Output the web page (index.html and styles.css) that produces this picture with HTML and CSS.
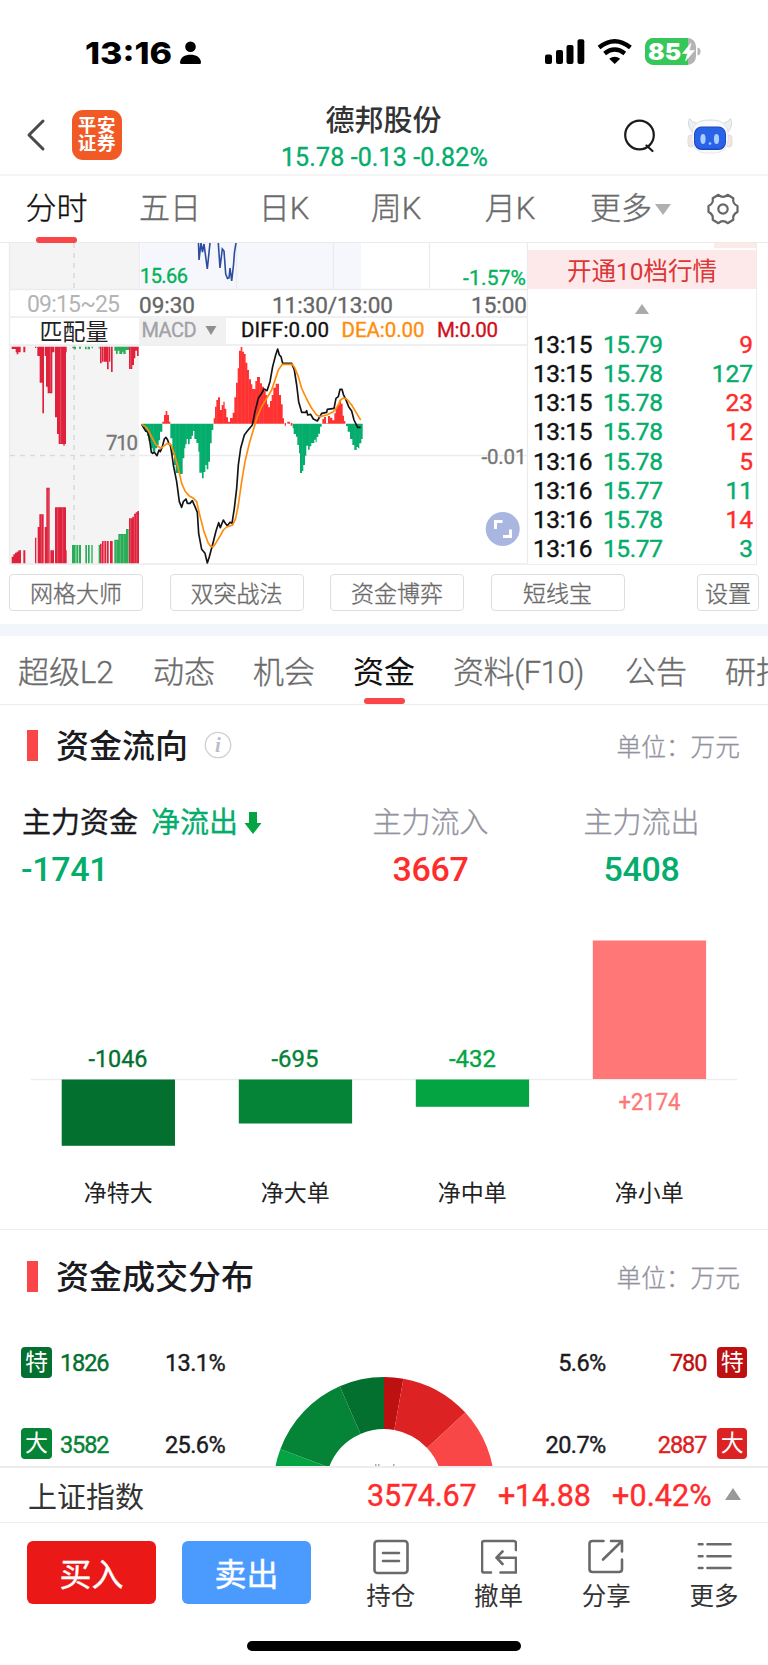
FILE: index.html
```html
<!DOCTYPE html>
<html lang="zh-CN">
<head>
<meta charset="utf-8">
<title>德邦股份</title>
<link rel="stylesheet" href="styles.css">
</head>
<body>
<div class="phone">
  <div class="status">
    <svg class="clock" viewBox="85 37 120 31" width="120" height="31"><text x="85" y="63.500" textLength="87" lengthAdjust="spacingAndGlyphs">13:16</text>
      <g transform="translate(180 41)"><circle cx="10.500" cy="5.800" r="5.300"/><path d="M0 21.500C.3 16 5 13.700 10.500 13.700S20.700 16 21 21.500Q21 23 19.500 23H1.500Q0 23 0 21.500Z"/></g></svg>
    <svg class="signals" viewBox="545 37 156 29" width="156" height="29">
      <rect x="545" y="54.500" width="7" height="9.500" rx="2"/><rect x="556" y="50" width="7" height="14" rx="2"/><rect x="566.500" y="45" width="7" height="19" rx="2"/><rect x="577.500" y="39.300" width="6.800" height="24.700" rx="2"/>
      <g fill="none" stroke="#000" stroke-width="4.400"><path d="M599 47.500Q614.700 34.800 630.400 47.500"/><path d="M604.600 53.400Q614.700 45.500 624.800 53.400"/></g>
      <path d="M609.200 58.800Q614.700 54.600 620.200 58.800L614.700 64Z"/>
      <rect x="645" y="38" width="51" height="27" rx="8.500" fill="#b3b3b3"/>
      <path d="M653.500 38H688V65H653.500A8.500 8.500 0 0 1 645 56.500V46.500A8.500 8.500 0 0 1 653.500 38Z" fill="#35c759"/>
      <path d="M697.500 47.500Q700.500 48 700.500 51.500T697.500 55.500Z" fill="#b3b3b3"/>
      <path d="M691 43L682.500 53.500H687.500L685.500 61L694.500 50.500H689.300Z" fill="#fff" stroke="#fff" stroke-width=".6"/>
      <text x="648" y="60" class="batt" textLength="33" lengthAdjust="spacingAndGlyphs">85</text>
    </svg>
  </div>

  <header class="head">
    <svg class="back" viewBox="0 0 20 34" width="20" height="34"><path d="M17 3L3 17L17 31" fill="none" stroke="#4a4a4a" stroke-width="3" stroke-linecap="round" stroke-linejoin="round"/></svg>
    <div class="logo"><span>平安</span><span>证券</span></div>
    <div class="title"><div class="name">德邦股份</div><div class="quote">15.78 -0.13 -0.82%</div></div>
    <svg class="search" viewBox="0 0 34 36" width="34" height="36"><g fill="none" stroke="#1b1b1f" stroke-width="2.200" stroke-linecap="round"><circle cx="16.500" cy="17" r="14.300"/><path d="M23.500 27.500L29.500 33"/></g></svg>
    <svg class="robot" viewBox="0 0 46 36" width="46" height="36">
      <path d="M5 14Q-.5 7 2.500 .5Q5.500 4.500 10 5.500Q13 2 23 2T36 5.500Q40.500 4.500 43.500 .5Q46.500 7 41 14Z" fill="#eeeff3" stroke="#d6d8df" stroke-width="1"/>
      <rect x="1" y="17" width="6" height="12" rx="3" fill="#f1e6e7" stroke="#dccfd2" stroke-width=".7"/><rect x="39" y="17" width="6" height="12" rx="3" fill="#f1e6e7" stroke="#dccfd2" stroke-width=".7"/>
      <rect x="5" y="2.500" width="36" height="32.500" rx="13" fill="#fafafc" stroke="#e0e1e8" stroke-width=".8"/>
      <rect x="7" y="8.500" width="32" height="23.500" rx="7.500" fill="#1c49bd"/><rect x="8" y="9.500" width="30" height="21" rx="6.500" fill="#2a63e8"/>
      <ellipse cx="16" cy="21" rx="2.600" ry="5" fill="#a8cfff"/><ellipse cx="29.500" cy="21" rx="2.600" ry="5" fill="#a8cfff"/><circle cx="23" cy="25.500" r="1.300" fill="#a8cfff"/>
    </svg>
  </header>

  <nav class="periods">
    <span class="on">分时</span><span>五日</span><span>日K</span><span>周K</span><span>月K</span>
    <span class="more">更多<i class="down"></i></span>
    <svg viewBox="-16 -16 32 32" width="32" height="32"><g fill="none" stroke="#666" stroke-width="2.200" stroke-linejoin="round"><path d="M14.500-3V3Q9.300 5.400 10.300 10.800L4.600 14.200Q0 10.200-4.600 14.200L-10.300 10.800Q-9.300 5.400-14.500 3V-3Q-9.300-5.400-10.300-10.800L-4.600-14.200Q0-10.200 4.600-14.200L10.300-10.800Q9.300-5.400 14.500-3Z"/><circle r="4.700"/></g></svg>
  </nav>

  <section class="market">
    <svg class="chart" viewBox="0 243 528 322" width="528" height="322">
      <path fill="#f4f4f4" d="M10 243H139V289H10ZM10 345H139V564H10Z"/>
      <path fill="#f5f7fc" d="M141 243H361V289H141Z"/>
      <path fill="#f1f1f2" d="M139 318H226V344H139Z"/>
      <g fill="none" stroke="#ececee" stroke-width="1.300">
        <path d="M9.500 243V564M139.500 243V289M236.500 243V289M333.500 243V289M429.500 243V289M527.500 243V564.500M10 289.500H528M10 317H528M10 345H528M139 455.500H528M10 564H528"/>
      </g>
      <path d="M74 243V289M74 345V564M10 455.500H139" fill="none" stroke="#d9d9da" stroke-width="1.500" stroke-dasharray="5 5"/>
      <path d="M198.500 243L199 260L201 243L202.500 252L204 244L207.300 269L210 243M218.300 243L220 268L222.300 249L224 251L225.700 274L227.500 278.500L229 278L230 268L231.700 281L233.500 265L234.500 252L236 243" fill="none" stroke="#2c4d9c" stroke-width="1.600"/>
      <g transform="translate(0 235) scale(.33333)">
        <path fill="#e0213c" d="M35 335H62V352H55V358H50V352H47V342H35ZM70 335H76V352H70ZM105 335H109V339H105ZM112 335H132V535H127V443H119V363H112ZM134 335H163V352H157V475H143V455H138V363H134ZM165 335H200V352H198V627H194V632H190V627H176V597H171V547H165ZM300 335H305V385H300ZM306 335H311V380H306ZM312 335H326V403H321V380H312ZM327 335H331V380H327ZM333 335H338V411H333ZM387 335H416V363H411V347H406V370H402V390H397V402H387Z"/>
        <path fill="#2bad58" d="M217 335H222V340H217ZM222 335H228V343H222ZM237 335H243V341H237ZM255 335H260V343H255ZM263 335H270V343H263ZM275 335H279V340H275ZM296 335H299V341H296ZM343 335H387V345H377V357H370V350H367V357H358V347H353V357H348V347H343Z"/>
        <path fill="#e0213c" d="M35 985V965H40V958H45V953H50V950H55V946H63V985ZM70 985V946H76V985ZM105 985V908H109V985ZM113 985V876H118V838H131V985ZM134 985V876H139V758H149V985ZM151 985V946H162V985ZM165 985V817H198V946H200V985ZM300 985V926H305V985ZM306 985V918H311V985ZM313 985V918H318V985ZM320 985V918H326V985ZM330 985V918H338V985ZM387 985V850H397V845H402V836H407V832H412V828H417V985Z"/>
        <path fill="#2bad58" d="M216 985V930H227V985ZM229 985V930H235V985ZM237 985V930H243V985ZM256 985V930H261V985ZM264 985V930H269V985ZM274 985V930H278V985ZM296 985V930H300V985ZM343 985V914H355V897H378V882H386V985Z"/>
        <path stroke="#f4f4f4" stroke-opacity=".55" stroke-width="1.200" d="M144.500 763V985M173 820V985M188 820V985M124 840V985M182 337V625M151 337V470M392 337V985M349 918V985M361 900V985M371 900V985M403 840V985M410 837V985"/>
      </g>
      <g transform="translate(130 235) scale(.33333)">
        <path fill="#04ad6c" d="M35 566V572H40V580H46V590H51V602H56V618H62V640H68V650H76V640H82V630H86V616H90V590H97V566ZM121 566V610H127V660H132V690H137V714H150V717H158V670H163V640H166V628H170V612H174V628H179V612H185V602H189V588H193V612H199V624H205V650H208V713H216V730H221V711H226V690H230V703H235V680H240V625H245V585H250V566ZM488 566V580H491V597H498V605H502V630H507V655H510V714H516V708H520V690H525V662H529V632H534V644H539V634H544V624H553V614H557V622H560V606H565V596H570V575H575V566ZM648 566V573H653V590H660V612H667V630H673V645H680V636H684V640H688V625H694V612H698V566Z"/>
        <path fill="#ff3232" d="M97 566V560H102V540H107V528H112V540H117V560H121V566ZM251 566V550H255V515H259V495H264V487H270V525H275V510H280V500H284V521H289V547H294V560H300V549H308V533H313V487H318V443H323V400H327V347H332V336H337V350H342V357H347V383H352V405H357V433H363V448H367V462H376V438H381V426H390V445H396V455H402V467H407V480H411V508H415V517H420V498H425V480H430V458H437V446H447V480H453V508H458V550H462V566ZM464 564H468V572H464ZM472 560H480V566H472ZM482 564H487V572H482ZM577 566V552H582V546H588V565H594V543H600V548H607V556H613V535H617V516H623V510H628V494H633V506H638V542H642V558H646V566Z"/>
        <path stroke="#fff" stroke-opacity=".22" stroke-width="1" d="M60 566V630M71 566V640M137 566V700M148 566V700M169 566V610M191 566V590M213 566V710M226 566V690M259 500V566M280 505V566M323 405V566M334 340V566M345 362V566M356 410V566M367 465V566M378 435V566M389 435V566M400 465V566M430 460V566M441 450V566M507 566V650M518 566V700M540 566V632M675 566V635M690 566V620"/>
        <path fill="none" stroke="#141414" stroke-width="5" stroke-linejoin="round" d="M35 568L47 588L54 592L60 622L64 652L68 655L73 652L81 662L87 645L91 650L97 635L103 612L108 607L113 615L117 627L121 630L126 660L130 690L140 740L148 800L155 817L160 800L168 792L172 805H180L187 797L195 815L202 832L206 895L215 943L225 955L232 984L238 965L250 920L258 888L266 863L271 878L280 855L286 865L292 872L300 862L306 865L313 820L320 760L325 690L332 640L343 600L352 588L367 570L375 530L385 490L395 475L402 462L411 467L420 440L428 395L437 360L443 342L448 360L453 365L458 385H485L493 405L500 450L506 500L515 532H527L530 527L533 540L542 538L550 552L562 558L575 535L590 532L592 523L612 520L618 490L625 485L630 463H636L640 478L648 495L656 515L665 528L672 555L683 577H692"/>
        <path fill="none" stroke="#ff8d0b" stroke-width="5" stroke-linejoin="round" d="M35 568L50 578L62 600L77 628L92 640L103 632L112 625L122 628L132 655L145 700L155 745L165 768L177 782L188 788L200 800L208 835L222 890L235 925L243 935H250L260 920L272 900L280 885L290 876L308 870L317 850L325 810L335 740L345 680L358 625L370 585L382 545L395 515L410 490L425 465L435 435L445 405L457 388H487L495 400L505 425L515 460L530 492L545 520L560 540L570 545L590 540L610 530L620 518L632 495L640 489L650 492L665 510L680 535L692 555"/>
      </g>
      <g class="num mid">
        <text x="140" y="282.500" font-size="20" fill="#04b25a" stroke="#04b25a" textLength="48">15.66</text>
        <text x="463" y="284.500" font-size="21" fill="#04b25a" stroke="#04b25a" textLength="63">-1.57%</text>
        <text x="27" y="311.500" font-size="23" fill="#b4b4b4" textLength="93">09:15~25</text>
        <text x="139" y="312.800" font-size="22.500" fill="#666" stroke="#666" textLength="56">09:30</text>
        <text x="272" y="312.800" font-size="22.500" fill="#666" stroke="#666" textLength="121">11:30/13:00</text>
        <text x="471" y="312.800" font-size="22.500" fill="#666" stroke="#666" textLength="56">15:00</text>
        <text x="39.500" y="340" font-size="23" fill="#222">匹配量</text>
        <text x="141.500" y="337" font-size="20" fill="#a2a2a8" stroke="#a2a2a8" textLength="55">MACD</text>
        <text x="241" y="337.300" font-size="20.500" fill="#111" stroke="#111" textLength="88">DIFF:0.00</text>
        <text x="341.500" y="337.300" font-size="20.500" fill="#ff8d0b" stroke="#ff8d0b" textLength="83">DEA:0.00</text>
        <text x="437" y="337.300" font-size="20.500" fill="#d0101c" stroke="#d0101c" textLength="61">M:0.00</text>
        <text x="106" y="450" font-size="20.500" fill="#777" stroke="#777" textLength="32">710</text>
        <text x="481.500" y="463.500" font-size="20.500" fill="#777" stroke="#777" textLength="45">-0.01</text>
      </g>
      <path d="M205.500 326H216.500L211 335Z" fill="#8f8f8f"/>
      <circle cx="502.700" cy="529" r="17" fill="#a9b7e0"/>
      <path d="M495.500 529V521.500H502.500M503 536.500H510.500V529.500" fill="none" stroke="#fff" stroke-width="3"/>
    </svg>
    <aside class="ticks">
      <div class="cut"><i></i></div>
      <div class="open10">开通10档行情</div>
      <div class="tri"><i class="up"></i></div>
      <div class="tick"><b>13:15</b><span>15.79</span><em class="r">9</em></div>
      <div class="tick"><b>13:15</b><span>15.78</span><em>127</em></div>
      <div class="tick"><b>13:15</b><span>15.78</span><em class="r">23</em></div>
      <div class="tick"><b>13:15</b><span>15.78</span><em class="r">12</em></div>
      <div class="tick"><b>13:16</b><span>15.78</span><em class="r">5</em></div>
      <div class="tick"><b>13:16</b><span>15.77</span><em>11</em></div>
      <div class="tick"><b>13:16</b><span>15.78</span><em class="r">14</em></div>
      <div class="tick"><b>13:16</b><span>15.77</span><em>3</em></div>
    </aside>
  </section>

  <div class="tools"><span>网格大师</span><span>双突战法</span><span>资金博弈</span><span>短线宝</span><span class="set">设置</span></div>
  <div class="band"></div>
  <nav class="topics"><span class="t0">超级L2</span><span>动态</span><span>机会</span><span class="on">资金</span><span class="t4">资料(F10)</span><span>公告</span><span>研报</span></nav>

  <section class="flow">
    <div class="sec-head"><i class="mark"></i><h2>资金流向</h2>
      <svg class="info" viewBox="0 0 28 28" width="28" height="28"><circle cx="14" cy="14" r="12.700" fill="none" stroke="#cfcfd8" stroke-width="1.300"/><text x="14" y="21" text-anchor="middle">i</text></svg>
      <span class="unit">单位：万元</span></div>
    <div class="stats">
      <div class="main"><div class="lab">主力资金<span class="out">净流出</span><svg viewBox="0 0 18 22" width="18" height="22"><path d="M5 0H13V11H17.500L9 22L.5 11H5Z" fill="#04a443"/></svg></div><div class="val g">-1741</div></div>
      <div class="side in"><div class="lab">主力流入</div><div class="val r">3667</div></div>
      <div class="side"><div class="lab">主力流出</div><div class="val g">5408</div></div>
    </div>
    <svg class="bars" viewBox="0 930 768 299" width="768" height="299">
      <path d="M31 1079.500H737" stroke="#ededf0" stroke-width="1.300"/>
      <rect x="61.700" y="1079.500" width="113.300" height="66.300" fill="#04702f"/>
      <rect x="238.800" y="1079.500" width="113.300" height="44" fill="#058337"/>
      <rect x="415.800" y="1079.500" width="113.300" height="27.300" fill="#04a443"/>
      <rect x="592.800" y="940.500" width="113.300" height="138.500" fill="#ff7777"/>
      <g class="num mid" font-size="23.500">
        <text x="88.500" y="1067" fill="#04702f" stroke="#04702f" textLength="59" lengthAdjust="spacingAndGlyphs">-1046</text>
        <text x="271.500" y="1067" fill="#058337" stroke="#058337" textLength="47" lengthAdjust="spacingAndGlyphs">-695</text>
        <text x="449" y="1067" fill="#04a443" stroke="#04a443" textLength="47" lengthAdjust="spacingAndGlyphs">-432</text>
        <text x="618.500" y="1110" fill="#ff7777" stroke="#ff7777" textLength="62" lengthAdjust="spacingAndGlyphs">+2174</text>
      </g>
      <g class="num" font-size="23" fill="#222" text-anchor="middle">
        <text x="118.300" y="1201">净特大</text><text x="295.300" y="1201">净大单</text><text x="472.300" y="1201">净中单</text><text x="649.300" y="1201">净小单</text>
      </g>
    </svg>
  </section>

  <section class="dist">
    <div class="sec-head"><i class="mark"></i><h2>资金成交分布</h2><span class="unit">单位：万元</span></div>
    <div class="split">
      <div class="col">
        <div class="row"><i class="g1">特</i><span class="c1">1826</span><b>13.1%</b></div>
        <div class="row"><i class="g2">大</i><span class="c2">3582</span><b>25.6%</b></div>
      </div>
      <svg class="donut" viewBox="264 1346 240 120" width="240" height="120">
        <path fill="#04702f" d="M384 1377A110.600 110.600 0 0 0 339.700 1386.200L360.500 1433.900A58.600 58.600 0 0 1 384 1429Z"/>
        <path fill="#058337" d="M339.700 1386.200A110.600 110.600 0 0 0 280.300 1449.200L329 1467.300A58.600 58.600 0 0 1 360.500 1433.900Z"/>
        <path fill="#04a443" d="M280.300 1449.200A110.600 110.600 0 0 0 273.400 1487.600H325.400A58.600 58.600 0 0 1 329 1467.300Z"/>
        <path fill="#bd1111" d="M384 1377A110.600 110.600 0 0 1 403.400 1378.700L394.300 1429.900A58.600 58.600 0 0 0 384 1429Z"/>
        <path fill="#dc2222" d="M403.400 1378.700A110.600 110.600 0 0 1 465.300 1412.600L427.100 1447.900A58.600 58.600 0 0 0 394.300 1429.900Z"/>
        <path fill="#f94747" d="M465.300 1412.600A110.600 110.600 0 0 1 494.600 1487.600H442.600A58.600 58.600 0 0 0 427.100 1447.900Z"/>
        <path fill="#aaa" d="M375 1464H376.500V1466H375ZM378 1464H379.500V1466H378ZM393 1464H394.500V1466H393Z"/>
      </svg>
      <div class="col right">
        <div class="row"><b>5.6%</b><span class="d1">780</span><i class="r1">特</i></div>
        <div class="row"><b>20.7%</b><span class="d2">2887</span><i class="r2">大</i></div>
      </div>
    </div>
  </section>

  <div class="index"><span class="iname">上证指数</span><span class="v1">3574.67</span><span class="v2">+14.88</span><span class="v3">+0.42%</span><i class="up"></i></div>

  <footer class="dock">
    <div class="btn buy">买入</div><div class="btn sell">卖出</div>
    <div class="act"><svg viewBox="0 0 36 36" width="36" height="36"><rect x="1.500" y="2" width="33" height="32" rx="3"/><path d="M10 14H26M10 22H26"/></svg>持仓</div>
    <div class="act"><svg viewBox="0 0 36 36" width="36" height="36"><path d="M35 11V4.500Q35 2 32.500 2H3Q1 2 1 4.500V31Q1 33.500 3 33.500H10M19.500 33.500H35V18.700H15.500M21.500 12.500L15.500 18.700L21.500 25"/></svg>撤单</div>
    <div class="act"><svg viewBox="0 0 36 36" width="36" height="36"><path d="M15.500 2H4.500Q1.500 2 1.500 5V30Q1.500 33 4.500 33H31Q34 33 34 30V20.500M15 20.500L34 2M23 2H34V12.500"/></svg>分享</div>
    <div class="act"><svg viewBox="0 0 36 36" width="36" height="36"><path d="M2.800 5.300H6.500M11.500 5.300H34.500M2.800 17.300H6.500M11.500 17.300H34.500M2.800 29H6.500M11.500 29H34.500"/></svg>更多</div>
  </footer>
  <div class="home"></div>
</div>
</body>
</html>
```
FILE: styles.css
```css
* { box-sizing: border-box; }
body { margin: 0; background: #fff; font-family: Roboto, "Noto Sans CJK SC", sans-serif; color: #1b1b1f; }
.phone { width: 768px; height: 1665px; overflow: hidden; background: #fff; display: flex; flex-direction: column; }
.phone > * { flex: none; }
svg { display: block; flex: none; }
i, em { font-style: normal; }
.num { font-family: Roboto, "Noto Sans CJK SC", sans-serif; }
.mid { stroke-width: .35px; }

.status { height: 100px; display: flex; align-items: flex-start; padding: 37px 67px 0 85px; }
.clock { overflow: visible; font: 800 30.500px Inter, sans-serif; }
.signals { margin-left: auto; }
.batt { font: 900 23px Inter, sans-serif; fill: #fff; }

.head { height: 76px; display: flex; padding: 0 35px 0 26px; border-bottom: 2px solid #f5f5f5; }
.back { margin-top: 18px; }
.logo { width: 50px; height: 50px; margin: 10px 0 0 26px; border-radius: 11px; background: #f15a24; color: #fff; font-size: 18.500px; font-weight: 700; line-height: 18px; padding-top: 7px; text-align: center; }
.logo span { display: block; height: 18px; letter-spacing: .6px; }
.title { width: 240px; margin-left: 142px; text-align: center; }
.name { font-size: 29px; line-height: 43px; font-weight: 500; color: #333; }
.quote { font-size: 25px; line-height: 30px; color: #04ad6c; margin: 0 -1px 0 1px; white-space: nowrap; letter-spacing: .12px; -webkit-text-stroke: .35px #04ad6c; }
.search { margin: 18px 0 0 120px; }
.robot { margin: 18px 0 0 30px; }

.periods { height: 67px; display: grid; grid-template-columns: 113px 114px 114px 110px 118px 122px 77px; border-bottom: 1px solid #ebebeb; font-size: 31px; line-height: 66px; color: #6a6a6a; text-align: center; font-weight: 300; -webkit-text-stroke: .35px currentColor; }
.periods svg { margin: 17px 0 0 16px; }
.periods .on { color: #111; position: relative; }
.on::after { content: ""; position: absolute; left: 50%; bottom: 0; width: 41px; height: 6px; margin-left: -20.500px; border-radius: 3px; background: #fa4549; }
.periods .on::after { bottom: -1px; }
.more { display: flex; align-items: center; padding-left: 21px; }
.down { border: 8px solid transparent; border-top: 11px solid #b0b0b0; border-bottom: 0; margin-left: 3px; }
.up { display: block; width: 0; border: 8.5px solid transparent; border-bottom: 12px solid #999; border-top: 0; }

.market { display: flex; height: 322px; }
.ticks { width: 229px; border-right: 1px solid #ececee; border-bottom: 1px solid #ececee; }
.cut { height: 7px; display: flex; justify-content: flex-end; }
.cut i { width: 42px; height: 5px; background: #fde9e8; }
.open10 { height: 39px; line-height: 44px; background: #fde9ea; color: #dc3636; font-size: 24.500px; text-align: center; }
.tri { height: 41px; display: flex; justify-content: center; padding-top: 15px; }
.tri .up { border-width: 0 7px 10px; border-bottom-color: #aaa; height: 0; }
.tick { display: flex; height: 29.150px; line-height: 30.500px; font-size: 24.500px; padding: 0 3px 0 5px; color: #04ad6c; letter-spacing: -.4px; -webkit-text-stroke: .4px currentColor; }
.tick b { width: 70px; color: #111; font-weight: 400; }
.tick em { margin-left: auto; letter-spacing: 0; }
.tick .r, .r { color: #ff2c2c; }
.g { color: #04ad6c; }

.tools { height: 59px; display: flex; gap: 26.500px; padding: 9px 9px 0 9px; }
.tools span { width: 134px; height: 37px; border: 1.500px solid #dedede; border-radius: 4px; font-size: 23px; line-height: 40px; text-align: center; color: #6a6a6a; font-weight: 300; -webkit-text-stroke: .35px currentColor; }
.tools .set { width: 62px; margin-left: auto; }
.band { height: 12px; background: #f2f5f9; }
.topics { height: 69px; display: flex; gap: 38px; padding-left: 18px; overflow: hidden; border-bottom: 1px solid #ebeef1; font-size: 31px; line-height: 74px; color: #6a6a6a; white-space: nowrap; font-weight: 300; -webkit-text-stroke: .35px currentColor; }
.topics span { flex: none; width: 62px; height: 68px; }
.topics .t0 { width: 97px; }
.topics .t4 { width: 134px; letter-spacing: -.4px; }
.topics .on { color: #111; position: relative; font-weight: 400; -webkit-text-stroke: 0; }

.sec-head { display: flex; height: 32px; padding: 0 27px; align-items: center; }
.mark { width: 11px; height: 31px; background: #fa4549; }
h2 { margin: 4px 0 0 18px; font-size: 33px; line-height: 32px; font-weight: 500; white-space: nowrap; }
.info { margin-left: 16px; }
.info text { font: italic 700 21px "Liberation Serif", serif; fill: #bdbdc8; }
.unit { margin: 0 1px 0 auto; font-size: 24.700px; color: #9393a0; font-weight: 300; -webkit-text-stroke: .3px currentColor; }
.flow { height: 525px; padding-top: 24px; border-bottom: 1px solid #ececf0; }
.stats { display: flex; height: 169px; padding: 39px 0 0 22px; }
.lab { font-size: 29px; line-height: 46px; display: flex; align-items: center; color: #9393a0; justify-content: center; white-space: nowrap; font-weight: 300; -webkit-text-stroke: .3px currentColor; }
.main .lab { color: #1b1b1f; justify-content: flex-start; font-weight: 400; }
.out { color: #04ad6c; margin: 0 6px 0 13px; }
.val { font-size: 34px; line-height: 40px; margin-top: 3px; text-align: center; font-weight: 500; letter-spacing: -.3px; }
.main .val { text-align: left; margin-left: -1px; }
.main { width: 303px; }
.side { width: 211px; }

.dist { height: 236px; padding-top: 30px; overflow: hidden; }
.split { display: flex; height: 120px; margin-top: 54px; }
.col { width: 264px; padding-left: 21px; }
.row { display: flex; height: 32px; margin-bottom: 49.500px; align-items: center; font-size: 23.500px; }
.row i { width: 31px; height: 31px; border-radius: 4px; color: #fff; font-size: 23px; line-height: 32px; text-align: center; }
.row span { width: 67px; padding: 2px 0 0 8px; letter-spacing: -1.100px; -webkit-text-stroke: .4px currentColor; }
.row b { font-weight: 400; width: 106px; padding-top: 2px; text-align: right; letter-spacing: -.6px; -webkit-text-stroke: .4px currentColor; }
.col.right { padding: 0 21px 0 0; }
.right .row { justify-content: flex-end; }
.right .row span { width: 116px; padding: 2px 11px 0 0; text-align: right; }
.g1 { background: #04702f; } .g2 { background: #058337; }
.r1 { background: #bd1111; } .r2 { background: #dc2222; }
.c1 { color: #04702f; } .c2 { color: #058337; }
.d1 { color: #bd1111; } .d2 { color: #dc2222; }

.index { height: 57px; border-top: 2px solid #ededef; border-bottom: 1px solid #e9ecf5; display: flex; align-items: center; padding: 0 27px 0 28px; font-size: 30.500px; color: #ff2c2c; letter-spacing: -.2px; -webkit-text-stroke: .4px currentColor; }
.iname { color: #333; font-size: 29px; width: 339px; letter-spacing: 0; -webkit-text-stroke: 0; }
.v1 { width: 131px; } .v2 { width: 114px; } .v3 { width: 113px; letter-spacing: .1px; }
.index .up { margin-top: -2px; }

.dock { height: 116px; display: flex; padding: 18px 0 0 27px; }
.btn { width: 129px; height: 63px; border-radius: 6px; color: #fff; font-size: 32px; line-height: 69px; font-weight: 400; text-align: center; -webkit-text-stroke: .4px #fff; }
.buy { background: #eb1818; }
.sell { background: #4b9bff; margin: 0 26px; }
.act { width: 107.700px; display: flex; flex-direction: column; align-items: center; font-size: 24.500px; line-height: 43px; color: #333; }
.act svg { margin-top: -2px; fill: none; stroke: #6a6a6a; stroke-width: 2.600; stroke-linecap: round; stroke-linejoin: round; }
.home { width: 274px; height: 10px; border-radius: 5px; background: #000; margin: 2px auto 0; }
```
